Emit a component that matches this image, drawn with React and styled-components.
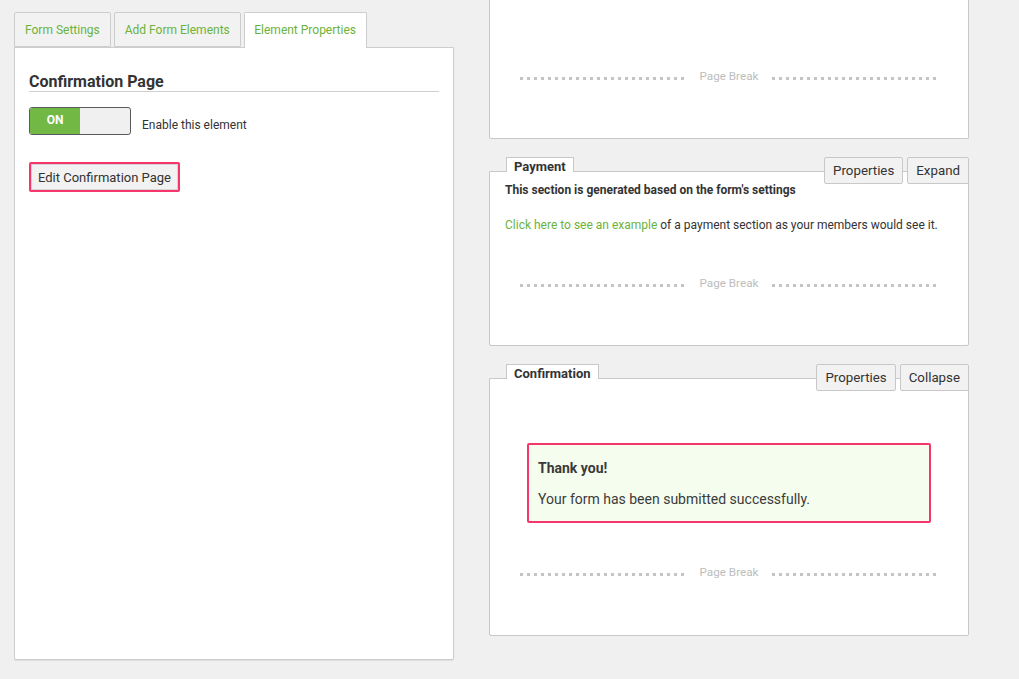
import React from "react";
import styled, { createGlobalStyle } from "styled-components";

const GlobalStyle = createGlobalStyle`
  html, body {
    margin: 0;
    padding: 0;
    background: #f0f0f0;
    font-family: Roboto, "Liberation Sans", Arial, sans-serif;
    color: #333;
  }
`;

const Page = styled.div`
  display: flex;
  flex-direction: row;
  align-items: flex-start;
  gap: 35px;
  padding-left: 14px;
  width: 1019px;
  height: 679px;
  box-sizing: border-box;
  overflow: hidden;
`;

const LeftColumn = styled.div`
  display: flex;
  flex-direction: column;
  width: 440px;
  padding-top: 12px;
`;

const TabBar = styled.div`
  display: flex;
  flex-direction: row;
  gap: 3px;
  position: relative;
  z-index: 1;
  margin-bottom: -1px;
`;

const Tab = styled.div`
  height: ${(p) => (p.$active ? "36px" : "35px")};
  box-sizing: border-box;
  padding: ${(p) => (p.$active ? "0 9.5px 1px" : "0 10px")};
  display: flex;
  align-items: center;
  font-size: 12px;
  color: #6bb33b;
  background: ${(p) => (p.$active ? "#fff" : "#f2f2f2")};
  border: 1px solid #cdcdcd;
  border-bottom: ${(p) => (p.$active ? "none" : "1px solid #cdcdcd")};
  border-radius: 2px 2px 0 0;
  align-self: flex-start;
`;

const Panel = styled.div`
  height: 613px;
  box-sizing: border-box;
  background: #fff;
  border: 1px solid #cdcdcd;
  border-radius: 0 0 2px 2px;
  box-shadow: 0 1px 1px rgba(0, 0, 0, 0.08);
  padding: 25px 14px 0 14px;
  display: flex;
  flex-direction: column;
`;

const PanelTitle = styled.h2`
  margin: 0;
  font-size: 16px;
  font-weight: 700;
  color: #333;
  border-bottom: 1px solid #cfcfcf;
  line-height: 18px;
`;

const ToggleRow = styled.div`
  display: flex;
  flex-direction: row;
  align-items: center;
  gap: 11px;
  margin-top: 15px;
`;

const Toggle = styled.div`
  width: 102px;
  height: 28px;
  box-sizing: border-box;
  border: 1px solid #5a5a5a;
  border-radius: 3px;
  background: #f0f0f0;
  display: flex;
  overflow: hidden;
`;

const ToggleOn = styled.div`
  width: 50px;
  background: #72b844;
  color: #fff;
  font-size: 12px;
  font-weight: 700;
  display: flex;
  align-items: center;
  justify-content: center;
  padding-bottom: 2px;
  box-sizing: border-box;
`;

const ToggleLabel = styled.span`
  font-size: 12px;
  color: #333;
  margin-top: 7px;
`;

const Highlight = styled.div`
  border: 2px solid #f5366c;
  border-radius: 2px;
  display: flex;
  flex-direction: column;
  align-self: ${(p) => (p.$block ? "stretch" : "flex-start")};
  margin-top: ${(p) => p.$top || 0}px;
`;

const EditButton = styled.div`
  height: 24px;
  padding: 0 6px 0 6px;
  display: flex;
  align-items: center;
  font-size: 13px;
  color: #333;
  background: #f2f2f2;
  border: 1px solid #d6d6d6;
`;

const RightColumn = styled.div`
  display: flex;
  flex-direction: column;
  width: 480px;
  gap: 18px;
`;

const TopCard = styled.div`
  height: 139px;
  box-sizing: border-box;
  background: #fff;
  border: 1px solid #c8c8c8;
  border-top: none;
  border-radius: 0 0 2px 2px;
  display: flex;
  flex-direction: column;
  padding-top: 69px;
`;

const Section = styled.div`
  position: relative;
  display: flex;
  flex-direction: column;
`;

const SectionTab = styled.div`
  align-self: flex-start;
  margin-left: 17px;
  height: 14px;
  padding: 0 7px;
  background: #fff;
  border: 1px solid #c8c8c8;
  border-bottom: none;
  font-size: 13px;
  font-weight: 700;
  color: #333;
  line-height: 18px;
  position: relative;
  z-index: 1;
  margin-bottom: -1px;
`;

const Toolbar = styled.div`
  position: absolute;
  top: 0;
  right: 0;
  display: flex;
  gap: 4px;
  z-index: 2;
`;

const ToolButton = styled.div`
  height: 27px;
  box-sizing: border-box;
  padding: 0 8px 1px;
  display: flex;
  align-items: center;
  font-size: 13.3px;
  color: #333;
  background: #f2f2f2;
  border: 1px solid #c8c8c8;
  border-radius: 2px;
`;

const Card = styled.div`
  height: ${(p) => p.$h}px;
  box-sizing: border-box;
  background: #fff;
  border: 1px solid #c8c8c8;
  border-radius: 0 0 2px 2px;
  display: flex;
  flex-direction: column;
  padding: ${(p) => p.$pad};
`;

const Note = styled.div`
  font-size: 12px;
  font-weight: 700;
  color: #333;
  padding-left: 15px;
`;

const Para = styled.div`
  font-size: 12px;
  color: #333;
  padding-left: 15px;
  margin-top: 21px;
`;

const Link = styled.span`
  color: #6bb33b;
`;

const Message = styled.div`
  background: #f5fdee;
  padding: 15px 9px 14px 9px;
  display: flex;
  flex-direction: column;
  gap: 15px;
`;

const MessageTitle = styled.div`
  font-size: 14px;
  font-weight: 700;
  color: #3a3a3a;
`;

const MessageText = styled.div`
  font-size: 14px;
  color: #3a3a3a;
`;

const BreakRow = styled.div`
  display: flex;
  flex-direction: row;
  align-items: center;
  justify-content: center;
  gap: 14px;
  margin-top: ${(p) => p.$top || 0}px;
`;

const BreakLine = styled.div`
  flex: 0 0 166px;
  height: 3px;
  margin-top: 4px;
  background: repeating-linear-gradient(
    to right,
    #c4c4c4 0,
    #c4c4c4 3px,
    transparent 3px,
    transparent 7px
  );
`;

const BreakText = styled.span`
  font-size: 11.7px;
  color: #bdbdbd;
  white-space: nowrap;
`;

function PageBreak({ top }) {
  return (
    <BreakRow $top={top}>
      <BreakLine />
      <BreakText>Page Break</BreakText>
      <BreakLine />
    </BreakRow>
  );
}

export default function App() {
  return (
    <>
      <GlobalStyle />
      <Page>
        <LeftColumn>
          <TabBar>
            <Tab>Form Settings</Tab>
            <Tab>Add Form Elements</Tab>
            <Tab $active>Element Properties</Tab>
          </TabBar>
          <Panel>
            <PanelTitle>Confirmation Page</PanelTitle>
            <ToggleRow>
              <Toggle>
                <ToggleOn>ON</ToggleOn>
              </Toggle>
              <ToggleLabel>Enable this element</ToggleLabel>
            </ToggleRow>
            <Highlight $top={27}>
              <EditButton>Edit Confirmation Page</EditButton>
            </Highlight>
          </Panel>
        </LeftColumn>

        <RightColumn>
          <TopCard>
            <PageBreak />
          </TopCard>

          <Section>
            <SectionTab>Payment</SectionTab>
            <Toolbar>
              <ToolButton>Properties</ToolButton>
              <ToolButton>Expand</ToolButton>
            </Toolbar>
            <Card $h={175} $pad="11px 0 0 0">
              <Note>This section is generated based on the form's settings</Note>
              <Para>
                <Link>Click here to see an example</Link> of a payment section as
                your members would see it.
              </Para>
              <PageBreak top={44} />
            </Card>
          </Section>

          <Section>
            <SectionTab>Confirmation</SectionTab>
            <Toolbar>
              <ToolButton>Properties</ToolButton>
              <ToolButton>Collapse</ToolButton>
            </Toolbar>
            <Card $h={258} $pad="64px 37px 0 37px">
              <Highlight $block>
                <Message>
                  <MessageTitle>Thank you!</MessageTitle>
                  <MessageText>Your form has been submitted successfully.</MessageText>
                </Message>
              </Highlight>
              <PageBreak top={42} />
            </Card>
          </Section>
        </RightColumn>
      </Page>
    </>
  );
}
